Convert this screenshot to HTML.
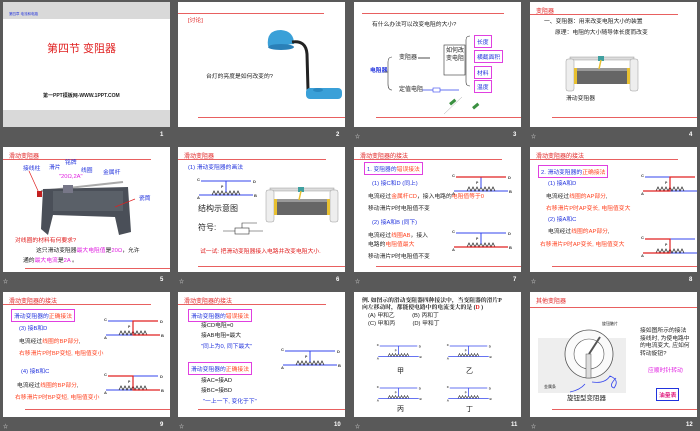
<!DOCTYPE html>
<html><head><meta charset="utf-8"><style>
*{margin:0;padding:0;box-sizing:border-box}
body{width:700px;height:431px;background:#595959;position:relative;overflow:hidden;font-family:"Liberation Sans","Noto Sans CJK SC",sans-serif}
.s{position:absolute;width:167px;height:125px;background:#fff;overflow:hidden}
.t{position:absolute;white-space:nowrap;font-size:5.8px;line-height:1;color:#222}
.r{color:#e02020}.b{color:#2233dd}.m{color:#e020e0}.o{color:#ff4422}
.hl{position:absolute;height:1px;background:#e86060}
.hd{position:absolute;left:6px;top:4px;font-size:6px;color:#e02020;white-space:nowrap}
.n{position:absolute;color:#fff;font-size:6px;font-weight:bold}
.ic{position:absolute;color:#ddd;font-size:5px}
.box{position:absolute;border:1px solid #e040e0;padding:1px 2px;font-size:5.8px;white-space:nowrap}
svg{position:absolute;overflow:visible}
</style></head><body>
<svg width="0" height="0" style="position:absolute">
<defs>
<g id="rh">
<line x1="5" y1="4" x2="55" y2="4" stroke="#3344ee" stroke-width="1"/>
<line x1="3" y1="18" x2="57" y2="18" stroke="#3344ee" stroke-width="1"/>
<polyline points="16,18 18,14 20,18 22,14 24,18 26,14 28,18 30,14 32,18 34,14 36,18 38,14 40,18 42,14 44,18" fill="none" stroke="#333" stroke-width="0.8"/>
<line x1="30" y1="4" x2="30" y2="15" stroke="#3344ee" stroke-width="1"/>
<text x="1" y="4" font-size="4" font-weight="bold" fill="#333">C</text>
<text x="57" y="6" font-size="4" font-weight="bold" fill="#333">D</text>
<text x="1" y="22" font-size="4" font-weight="bold" fill="#333">A</text>
<text x="58" y="20" font-size="4" font-weight="bold" fill="#333">B</text>
<text x="25" y="11" font-size="3.5" font-weight="bold" fill="#333">P</text>
</g>
<g id="photo">
<rect x="8" y="3" width="64" height="3" fill="#ddd" stroke="#999" stroke-width=".5"/>
<rect x="4" y="5" width="8" height="32" rx="2" fill="#eee" stroke="#999" stroke-width=".5"/>
<rect x="68" y="5" width="8" height="32" rx="2" fill="#eee" stroke="#999" stroke-width=".5"/>
<rect x="12" y="14" width="56" height="16" fill="#666"/>
<rect x="12" y="14" width="56" height="3" fill="#999"/>
<rect x="12" y="14" width="3" height="16" fill="#e8c030"/>
<rect x="65" y="14" width="3" height="16" fill="#e8c030"/>
<rect x="36" y="2" width="6" height="5" fill="#40a0a0"/>
<line x1="39" y1="6" x2="37" y2="15" stroke="#e8c030" stroke-width="1.5"/>
</g>
</defs></svg>

<!-- Slide 1 -->
<div class="s" style="left:3px;top:2px">
<div style="position:absolute;left:0;top:0;width:167px;height:17px;background:#d9d9d9"></div>
<div class="t b" style="left:6px;top:11px;font-size:3.5px">第四章 电流和电路</div>
<div class="t r" style="left:44px;top:42px;font-size:11px">第四节 变阻器</div>
<div class="t" style="left:40px;top:92px;font-size:5px;font-weight:bold">第一PPT模板网-WWW.1PPT.COM</div>
<div style="position:absolute;left:0;top:108px;width:167px;height:17px;background:#d9d9d9"></div>
</div>
<div class="n" style="left:160px;top:132px">1</div>

<!-- Slide 2 -->
<div class="s" style="left:178px;top:2px">
<div class="hl" style="left:0;top:11px;width:146px"></div>
<div class="t r" style="left:10px;top:17px">[讨论]</div>
<svg width="167" height="125" style="left:0;top:0">
<path d="M90 44 Q88 28 103 28 Q116 29 116 42 Z" fill="#3aa0d8"/>
<ellipse cx="103" cy="45" rx="13" ry="3" fill="#2a80b8"/>
<path d="M114 40 Q128 38 129 52 L130 88" fill="none" stroke="#222" stroke-width="3"/>
<rect x="128" y="86" width="36" height="11" rx="4" fill="#3aa0d8"/>
<ellipse cx="140" cy="88" rx="5" ry="2" fill="#2a88c0"/>
</svg>
<div class="t" style="left:28px;top:73px">台灯的亮度是如何改变的?</div>
<div class="hl" style="left:20px;top:115px;width:147px"></div>
</div>
<div class="n" style="left:336px;top:132px">2</div>

<!-- Slide 3 -->
<div class="s" style="left:354px;top:2px">
<div class="hl" style="left:8px;top:11px;width:142px"></div>
<div class="t" style="left:18px;top:21px">有什么办法可以改变电阻的大小?</div>
<div class="t b" style="left:16px;top:67px;font-weight:bold">电阻器</div>
<svg width="167" height="125" style="left:0;top:0">
<path d="M38 55 Q34 55 34 60 L34 82 Q34 88 38 88" fill="none" stroke="#333" stroke-width=".6"/>
<line x1="30" y1="70" x2="34" y2="70" stroke="#333" stroke-width=".6"/>
<line x1="64" y1="56" x2="76" y2="56" stroke="#222" stroke-width=".8"/>
<rect x="90" y="43" width="21" height="30" fill="none" stroke="#333" stroke-width=".6"/>
<path d="M116 34 Q112 34 112 38 L112 80 Q112 84 116 84" fill="none" stroke="#333" stroke-width=".6"/>
<line x1="68" y1="88" x2="105" y2="88" stroke="#3344ee" stroke-width=".7"/>
<rect x="79" y="86" width="7" height="4" fill="#fff" stroke="#3344ee" stroke-width=".6"/>
<line x1="108" y1="95" x2="90" y2="112" stroke="#aaa" stroke-width=".5"/>
<rect x="95" y="99" width="7" height="3" fill="#3a9040" transform="rotate(-40 98 100)"/>
<rect x="118" y="103" width="7" height="3" fill="#3a9040" transform="rotate(-40 121 104)" />
</svg>
<div class="t" style="left:45px;top:53px;font-size:6px">变阻器</div>
<div class="t" style="left:92px;top:45px;font-size:6px;line-height:8px;white-space:normal;width:18px">如何改变电阻</div>
<div class="box b" style="left:120px;top:33px">长度</div>
<div class="box b" style="left:120px;top:48px">横截面积</div>
<div class="box b" style="left:120px;top:64px">材料</div>
<div class="box b" style="left:120px;top:78px">温度</div>
<div class="t" style="left:45px;top:85px;font-size:6px">定值电阻</div>
<div class="hl" style="left:22px;top:115px;width:145px"></div>
</div>
<div class="ic" style="left:355px;top:133px">☆</div>
<div class="n" style="left:513px;top:132px">3</div>

<!-- Slide 4 -->
<div class="s" style="left:530px;top:2px">
<div class="hd">变阻器</div>
<div class="hl" style="left:0;top:12px;width:148px"></div>
<div class="t" style="left:14px;top:18px">一、变阻器：用来改变电阻大小的装置</div>
<div class="t" style="left:25px;top:29px">原理：电阻的大小随导体长度而改变</div>
<svg width="90" height="40" style="left:32px;top:52px"><use href="#photo"/></svg>
<div class="t" style="left:36px;top:95px">滑动变阻器</div>
<div class="hl" style="left:22px;top:115px;width:145px"></div>
</div>
<div class="ic" style="left:531px;top:133px">☆</div>
<div class="n" style="left:689px;top:132px">4</div>

<!-- Slide 5 -->
<div class="s" style="left:3px;top:147px">
<div class="hd">滑动变阻器</div>
<div class="hl" style="left:0;top:12px;width:148px"></div>
<div class="t b" style="left:20px;top:20px">接线柱</div>
<div class="t b" style="left:46px;top:19px">滑片</div>
<div class="t b" style="left:62px;top:14px">铭牌</div>
<div class="t m" style="left:56px;top:28px">"20Ω,2A"</div>
<div class="t b" style="left:78px;top:22px">线圈</div>
<div class="t b" style="left:100px;top:24px">金属杆</div>
<div class="t b" style="left:136px;top:50px">瓷筒</div>
<svg width="167" height="125" style="left:0;top:0">
<line x1="38" y1="44" x2="120" y2="35" stroke="#aaa" stroke-width="2"/>
<polygon points="40,42 125,40 128,85 116,88 112,70 50,68 45,88 38,82" fill="#4a4f58"/>
<rect x="50" y="44" width="70" height="20" fill="#5a6068"/>
<rect x="60" y="38" width="10" height="8" fill="#778"/>
<rect x="34" y="44" width="5" height="6" fill="#c02020"/>
<line x1="26" y1="24" x2="36" y2="46" stroke="#e02020" stroke-width=".7"/>
<line x1="132" y1="52" x2="112" y2="60" stroke="#e02020" stroke-width=".7"/>
</svg>
<div class="t r" style="left:12px;top:92px">对线圈的材料有何要求?</div>
<div class="t" style="left:33px;top:102px">这只滑动变阻器<span class="m">最大电阻值</span>是<span class="m">20Ω</span>，允许</div>
<div class="t" style="left:20px;top:112px">通的<span class="m">最大电流</span>是<span class="m">2A</span> 。</div>
<div class="hl" style="left:22px;top:121px;width:145px"></div>
</div>
<div class="ic" style="left:3px;top:278px">☆</div>
<div class="n" style="left:160px;top:277px">5</div>

<!-- Slide 6 -->
<div class="s" style="left:178px;top:147px">
<div class="hd">滑动变阻器</div>
<div class="hl" style="left:0;top:12px;width:148px"></div>
<div class="t b" style="left:10px;top:19px">(1) 滑动变阻器的画法</div>
<svg width="60" height="24" style="left:18px;top:30px" viewBox="0 0 60 24"><use href="#rh"/></svg>
<div class="t" style="left:20px;top:58px;font-size:8px">结构示意图</div>
<div class="t" style="left:20px;top:77px;font-size:8px">符号:</div>
<svg width="40" height="14" style="left:45px;top:75px"><line x1="0" y1="9" x2="40" y2="9" stroke="#333" stroke-width=".6"/><rect x="12" y="6" width="14" height="6" fill="#fff" stroke="#333" stroke-width=".6"/><polyline points="19,6 19,1 34,1" fill="none" stroke="#333" stroke-width=".6"/></svg>
<svg width="90" height="40" style="left:84px;top:38px"><use href="#photo"/></svg>
<div class="t r" style="left:22px;top:103px">试一试: 把滑动变阻器接入电路并改变电阻大小.</div>
<div class="hl" style="left:20px;top:119px;width:147px"></div>
</div>
<div class="ic" style="left:179px;top:278px">☆</div>
<div class="n" style="left:336px;top:277px">6</div>

<!-- Slide 7 -->
<div class="s" style="left:354px;top:147px">
<div class="hd">滑动变阻器的接法</div>
<div class="hl" style="left:0;top:12px;width:148px"></div>
<div class="box b" style="left:10px;top:15px;background:#fff">1. 变阻器的<span class="o">错误接法</span></div>
<div class="t b" style="left:18px;top:35px">(1) 接C和D (同上)</div>
<div class="t" style="left:14px;top:48px">电流经过<span class="o">金属杆CD</span>，接入电路的<span class="o">电阻值等于0</span></div>
<div class="t" style="left:14px;top:60px">移动滑片P时电阻值不变</div>
<svg width="60" height="24" style="left:97px;top:26px" viewBox="0 0 60 24"><use href="#rh"/><line x1="5" y1="4" x2="55" y2="4" stroke="#e02020" stroke-width="1.2"/></svg>
<div class="t b" style="left:18px;top:74px">(2) 接A和B (同下)</div>
<div class="t" style="left:14px;top:87px">电流经过<span class="o">线圈AB</span>，接入</div>
<div class="t" style="left:14px;top:96px">电路的<span class="o">电阻值最大</span></div>
<div class="t" style="left:14px;top:108px">移动滑片P时电阻值不变</div>
<svg width="60" height="24" style="left:97px;top:82px" viewBox="0 0 60 24"><use href="#rh"/><line x1="3" y1="18" x2="57" y2="18" stroke="#e02020" stroke-width="1.2"/></svg>
<div class="hl" style="left:22px;top:119px;width:145px"></div>
</div>
<div class="ic" style="left:355px;top:278px">☆</div>
<div class="n" style="left:513px;top:277px">7</div>

<!-- Slide 8 -->
<div class="s" style="left:530px;top:147px">
<div class="hd">滑动变阻器的接法</div>
<div class="hl" style="left:0;top:12px;width:148px"></div>
<div class="box b" style="left:8px;top:18px">2. 滑动变阻器的<span class="o">正确接法</span></div>
<div class="t b" style="left:18px;top:35px">(1) 接A和D</div>
<div class="t" style="left:16px;top:48px">电流经过<span class="o">线圈的AP部分</span>,</div>
<div class="t o" style="left:16px;top:60px">右移滑片P时AP变长, 电阻值变大</div>
<svg width="60" height="24" style="left:110px;top:26px" viewBox="0 0 60 24"><use href="#rh"/><path d="M3 18 H30 V4 H55" fill="none" stroke="#e02020" stroke-width="1.2"/></svg>
<div class="t b" style="left:18px;top:71px">(2) 接A和C</div>
<div class="t" style="left:18px;top:83px">电流经过<span class="o">线圈的AP部分</span>,</div>
<div class="t o" style="left:10px;top:96px">右移滑片P时AP变长, 电阻值变大</div>
<svg width="60" height="24" style="left:110px;top:88px" viewBox="0 0 60 24"><use href="#rh"/><path d="M3 18 H30 V4 H5" fill="none" stroke="#e02020" stroke-width="1.2"/></svg>
<div class="hl" style="left:22px;top:119px;width:145px"></div>
</div>
<div class="ic" style="left:531px;top:278px">☆</div>
<div class="n" style="left:689px;top:277px">8</div>

<!-- Slide 9 -->
<div class="s" style="left:3px;top:292px">
<div class="hd">滑动变阻器的接法</div>
<div class="hl" style="left:0;top:12px;width:148px"></div>
<div class="box b" style="left:8px;top:17px">滑动变阻器的<span class="o">正确接法</span></div>
<div class="t b" style="left:16px;top:35px">(3) 接B和D</div>
<div class="t" style="left:16px;top:48px">电流经过<span class="o">线圈的BP部分</span>,</div>
<div class="t o" style="left:16px;top:60px">右移滑片P时BP变短, 电阻值变小</div>
<svg width="60" height="24" style="left:100px;top:25px" viewBox="0 0 60 24"><use href="#rh"/><path d="M57 18 H30 V4 H55" fill="none" stroke="#e02020" stroke-width="1.2"/></svg>
<div class="t b" style="left:18px;top:78px">(4) 接B和C</div>
<div class="t" style="left:14px;top:92px">电流经过<span class="o">线圈的BP部分</span>,</div>
<div class="t o" style="left:12px;top:104px">右移滑片P时BP变短, 电阻值变小</div>
<svg width="60" height="24" style="left:100px;top:80px" viewBox="0 0 60 24"><use href="#rh"/><path d="M57 18 H30 V4 H5" fill="none" stroke="#e02020" stroke-width="1.2"/></svg>
<div class="hl" style="left:22px;top:117px;width:145px"></div>
</div>
<div class="ic" style="left:3px;top:423px">☆</div>
<div class="n" style="left:160px;top:422px">9</div>

<!-- Slide 10 -->
<div class="s" style="left:178px;top:292px">
<div class="hd">滑动变阻器的接法</div>
<div class="hl" style="left:0;top:12px;width:148px"></div>
<div class="box b" style="left:10px;top:17px">滑动变阻器的<span class="o">错误接法</span></div>
<div class="t" style="left:23px;top:32px">接CD电阻=0</div>
<div class="t" style="left:23px;top:42px">接AB电阻=最大</div>
<div class="t b" style="left:23px;top:53px">"同上为0, 同下最大"</div>
<div class="box b" style="left:10px;top:70px">滑动变阻器的<span class="o">正确接法</span></div>
<div class="t" style="left:23px;top:87px">接AC=接AD</div>
<div class="t" style="left:23px;top:97px">接BC=接BD</div>
<div class="t b" style="left:25px;top:108px">"一上一下, 变化于下"</div>
<svg width="60" height="24" style="left:102px;top:55px" viewBox="0 0 60 24"><use href="#rh"/></svg>
<div class="hl" style="left:20px;top:117px;width:147px"></div>
</div>
<div class="ic" style="left:179px;top:423px">☆</div>
<div class="n" style="left:334px;top:422px">10</div>

<!-- Slide 11 -->
<div class="s" style="left:354px;top:292px">
<div class="t" style="left:8px;top:7px;font-weight:bold;font-family:'Liberation Serif','Noto Serif CJK SC',serif">例. 如图示的滑动变阻器四种接法中，当变阻器的滑片P</div>
<div class="t" style="left:8px;top:14px;font-weight:bold;font-family:'Liberation Serif','Noto Serif CJK SC',serif">向左移动时，都能使电路中的电流变大的是 (<span class="r">D</span> )</div>
<div class="t" style="left:14px;top:22px">(A) 甲和乙　　　(B) 丙和丁</div>
<div class="t" style="left:14px;top:30px">(C) 甲和丙　　　(D) 甲和丁</div>
<svg width="45" height="20" style="left:22px;top:50px" viewBox="0 0 60 24"><use href="#rh"/></svg>
<svg width="45" height="20" style="left:92px;top:50px" viewBox="0 0 60 24"><use href="#rh"/></svg>
<div class="t" style="left:43px;top:76px;font-size:7px">甲</div>
<div class="t" style="left:112px;top:76px;font-size:7px">乙</div>
<svg width="45" height="20" style="left:22px;top:92px" viewBox="0 0 60 24"><use href="#rh"/></svg>
<svg width="45" height="20" style="left:92px;top:92px" viewBox="0 0 60 24"><use href="#rh"/></svg>
<div class="t" style="left:43px;top:114px;font-size:7px">丙</div>
<div class="t" style="left:112px;top:114px;font-size:7px">丁</div>
</div>
<div class="ic" style="left:355px;top:423px">☆</div>
<div class="n" style="left:511px;top:422px">11</div>

<!-- Slide 12 -->
<div class="s" style="left:530px;top:292px">
<div class="hd">其他变阻器</div>
<div class="hl" style="left:0;top:15px;width:167px"></div>
<div style="position:absolute;left:8px;top:46px;width:88px;height:55px;background:#eee"></div>
<svg width="167" height="125" style="left:0;top:0">
<circle cx="59" cy="62" r="24" fill="#fafafa" stroke="#555" stroke-width=".8"/>
<circle cx="59" cy="62" r="15" fill="#fff" stroke="#555" stroke-width=".6"/>
<line x1="59" y1="62" x2="70" y2="45" stroke="#555" stroke-width="2"/>
<rect x="56" y="62" width="5" height="24" fill="#ddd" stroke="#555" stroke-width=".5"/>
<path d="M40 100 Q50 98 55 92 M62 90 Q75 92 80 84 Q90 88 84 96 Q78 94 86 86" fill="none" stroke="#3344ee" stroke-width=".8"/>
</svg>
<div class="t" style="left:72px;top:30px;font-size:4px">旋钮触片</div>
<div class="t" style="left:14px;top:93px;font-size:4px">金属条</div>
<div class="t" style="left:37px;top:104px;font-size:6.5px">旋钮型变阻器</div>
<div class="t" style="left:110px;top:36px;line-height:7.5px;white-space:normal;width:52px">接如图所示的接法接线时, 为使电路中的电流变大, 应如何转动旋钮?</div>
<div class="t m" style="left:118px;top:77px">应顺时针转动</div>
<div class="box b" style="left:126px;top:96px;font-weight:bold;color:#e02080;border-color:#2233dd">油量表</div>
<div class="hl" style="left:22px;top:117px;width:145px"></div>
</div>
<div class="ic" style="left:531px;top:423px">☆</div>
<div class="n" style="left:686px;top:422px">12</div>
</body></html>
